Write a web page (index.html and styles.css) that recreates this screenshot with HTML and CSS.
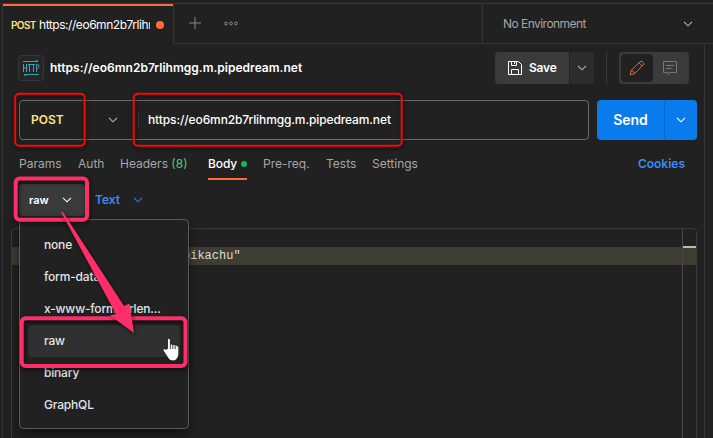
FILE: index.html
```html
<!DOCTYPE html>
<html lang="en">
<head>
<meta charset="utf-8">
<title>API client</title>
<link rel="stylesheet" href="styles.css">
</head>
<body>
<div class="app">
  <header class="topbar">
    <div class="tab"><span class="tab-method">POST</span><span class="tab-name">https://eo6mn2b7rlihm</span><i class="unsaved"></i></div>
    <div class="tab-tools">
      <svg class="plus" width="12" height="12" viewBox="0 0 12 12"><path d="M6 0v12M0 6h12"/></svg>
      <svg class="more" width="14" height="5" viewBox="0 0 14 5"><circle cx="2" cy="2.5" r="1.4"/><circle cx="7" cy="2.5" r="1.4"/><circle cx="12" cy="2.5" r="1.4"/></svg>
    </div>
    <div class="environment"><span>No Environment</span><svg class="chevron" width="10" height="6" viewBox="0 0 10 6"><path d="M1 .8l4 4 4-4"/></svg></div>
  </header>
  <main class="request">
    <div class="title-row">
      <span class="http"><svg width="18" height="16" viewBox="0 0 18 16"><path d="M1 1.5h15M13.5 0l2.5 1.5M2 14.5h15M2 14.5l2.5 1.5M1.5 4v8M4.5 4v8M1.5 8h3M6 4.5h4M7.5 4.5V12M9.5 4.5h3.5M11.5 4.5V12M14.5 12V4.5h1q1.5 0 1.5 1.7T15.5 8.5h-1"/></svg></span>
      <h1>https://eo6mn2b7rlihmgg.m.pipedream.net</h1>
      <div class="save-group">
        <button class="save"><svg width="14" height="14" viewBox="0 0 14 14"><path d="M.5.5h10l3 3v10H.5zM3.5.5v4h5v-4M6.5 1v2M3.5 13V8.5h7V13"/></svg>Save</button>
        <button class="save-more"><svg class="chevron" width="10" height="6" viewBox="0 0 10 6"><path d="M1 .8l4 4 4-4"/></svg></button>
      </div>
      <i class="separator"></i>
      <div class="modes">
        <span class="mode active"><svg width="16" height="16" viewBox="0 0 16 16"><path d="M1.2 14.8l1-4.3L11 1.7q1-1 2.2-.1l1.1 1.1q1 1.1 0 2.2L5.5 13.7zM10 2.8L13.2 6M2.2 10.5q2.5.3 3.3 3.2"/></svg></span>
        <span class="mode"><svg width="14" height="14" viewBox="0 0 14 14"><path d="M.5.5h13v11H7l-2 2v-2H.5zM3 4.5h8M3 7.5h5.5"/></svg></span>
      </div>
    </div>
    <div class="url-row">
      <div class="url-box">
        <span class="method">POST</span>
        <svg class="chevron" width="10" height="6" viewBox="0 0 10 6"><path d="M1 .8l4 4 4-4"/></svg>
        <span class="url">https://eo6mn2b7rlihmgg.m.pipedream.net</span>
      </div>
      <div class="send"><span>Send</span><b><svg class="chevron" width="10" height="6" viewBox="0 0 10 6"><path d="M1 .8l4 4 4-4"/></svg></b></div>
    </div>
    <nav>
      <a class="params">Params</a><a class="auth">Auth</a><a class="headers">Headers <em>(8)</em></a><a class="body-tab">Body<i></i></a><a class="pre">Pre-req.</a><a class="tests">Tests</a><a class="settings">Settings</a><a class="cookies">Cookies</a>
    </nav>
    <div class="body-options">
      <div class="type"><span>raw</span><svg class="chevron" width="10" height="6" viewBox="0 0 10 6"><path d="M1 .8l4 4 4-4"/></svg></div>
      <div class="language"><span>Text</span><svg class="chevron" width="10" height="6" viewBox="0 0 10 6"><path d="M1 .8l4 4 4-4"/></svg></div>
    </div>
    <section class="editor"><div class="code"><pre>pikachu"</pre></div><div class="ruler"><i></i></div></section>
  </main>
  <div class="menu">
    <div>none</div><div>form-data</div><div>x-www-form-urlen...</div><div class="selected">raw</div><div>binary</div><div>GraphQL</div>
  </div>
  <svg class="notes" width="713" height="438" viewBox="0 0 713 438">
    <g class="red"><rect x="15.2" y="93.7" width="69.5" height="52" rx="4"/><rect x="133.7" y="93.7" width="268" height="52" rx="4"/></g>
    <g class="pink"><rect x="15.7" y="178.5" width="71.3" height="41.2" rx="4"/><rect x="21.7" y="318.3" width="163.8" height="47.8" rx="4"/></g>
    <path class="arrow" d="M61 212Q62 211 63.5 213L124 306L129.5 303.5L134 333L110 315.5L116 314Z"/>
    <path class="hand" d="M167.5 348.5v-8.6q0-1.7 1.4-1.7t1.4 1.7v4.6q1-1 2.3.2 1.4-.8 2.4.5 1.5-.6 2.3.8 1.5-.2 1.5 1.6v5.9q0 3.2-1.8 5.4-1.5 2-4.2 2-3 0-4.4-2.3l-5-7.6q-.8-1.4.2-2.1 1.2-.7 2.3.5zM170.3 344.5v4.5M172.8 345v4M175.2 345.7v3.5"/>
  </svg>
</div>
</body>
</html>
```
FILE: styles.css
```css
* { box-sizing: border-box; }
body { margin: 0; background: #212121; color: #fff; font: 12px/16px Inter, sans-serif; }
svg { display: block; flex: none; fill: none; stroke: currentColor; }
h1, pre { margin: 0; }
button { border: 0; padding: 0; color: inherit; font: inherit; }
.app { position: relative; width: 713px; height: 438px; overflow: hidden; }
.topbar { display: flex; height: 44px; padding: 3px 0 0 2px; background: linear-gradient(#3a3a3a, #3a3a3a) 0 3px / 100% 1px no-repeat; }
.tab { display: flex; align-items: center; width: 172px; padding: 3px 9px 0 8px; border: solid #353535; border-width: 0 1px; background: linear-gradient(#ff6c37, #ff6c37) 0 1px / 100% 2px no-repeat; }
.tab-method { flex: none; width: 28px; color: #ffe47e; font-size: 10px; font-weight: 600; letter-spacing: -.6px; }
.tab-name { flex: none; width: 111px; overflow: hidden; white-space: nowrap; letter-spacing: -.45px; }
.unsaved { flex: none; width: 8px; height: 8px; margin-left: 6px; border-radius: 50%; background: #ff6c37; }
.tab-tools { display: flex; align-items: center; gap: 23px; width: 308px; padding-left: 15px; border-bottom: 1px solid #353535; color: #888; }
.more { stroke-width: 1; }
.environment { display: flex; align-items: center; justify-content: space-between; flex: 1; padding: 1px 20px 0 20px; border: solid #353535; border-width: 0 0 1px 1px; color: #a6a6a6; letter-spacing: -.54px; }
.chevron { color: #b5b5b5; stroke-width: 1.1; }
.request { width: 703px; height: 394px; margin-left: 2px; padding: 0 7px 0 8px; border: solid #353535; border-width: 0 1px; }
.title-row { display: flex; align-items: center; height: 48px; padding-left: 7px; }
.http { display: grid; place-items: center; width: 26px; height: 26px; border: 1px solid #383838; border-radius: 4px; color: #38a5b5; background: #262626; }
h1 { width: 445px; margin-left: 6px; font-size: 12px; line-height: 16px; font-weight: 600; letter-spacing: .02px; }
.save-group { display: flex; gap: 1px; height: 32px; }
.save { display: flex; align-items: center; gap: 7px; width: 74px; padding-left: 13px; border-radius: 4px 0 0 4px; background: #3b3b3b; font-weight: 600; letter-spacing: -.2px; }
.save-more { display: grid; place-items: center; width: 24px; border-radius: 0 4px 4px 0; background: #2c2c2c; }
.separator { width: 1px; height: 32px; margin: 0 12px; background: #3a3a3a; }
.modes { display: flex; width: 70px; height: 32px; padding: 2px; border-radius: 4px; background: #3b3b3b; }
.mode { display: grid; place-items: center; width: 34px; color: #777; }
.mode.active { width: 32px; border-radius: 4px; background: #212121; color: #e76535; }
.url-row { display: flex; gap: 8px; margin: 8px 0 0 8px; height: 40px; }
.url-box { display: flex; align-items: center; width: 570px; padding-left: 11px; border: 1px solid #6b6b6b; border-radius: 4px; }
.method { width: 77px; color: #ffe47e; font-weight: 600; }
.url { height: 18px; margin-left: 20px; padding-left: 9px; border-left: 1px solid #3a3a3a; font-weight: 500; line-height: 18px; letter-spacing: -.11px; white-space: nowrap; }
.send { display: flex; align-items: stretch; width: 100px; border-radius: 4px; background: #097bed; font: 600 14px/40px Inter, sans-serif; text-align: center; }
.send span { width: 67px; }
.send b { display: grid; flex: 1; place-items: center; border-left: 1px solid #0869cc; }
.send .chevron { color: #fff; }
nav { display: flex; height: 40px; padding: 12px 12px 0 8px; line-height: 24px; color: #a6a6a6; white-space: nowrap; }
nav a { height: 28px; }
nav em { color: #4cce78; font-style: normal; }
.params { width: 59px; }
.auth { width: 42px; }
.headers { width: 88px; }
.body-tab { display: flex; align-items: center; justify-content: space-between; width: 39px; margin-right: 16px; padding-bottom: 2px; border-bottom: 2px solid #ff6c37; color: #fff; font-weight: 500; letter-spacing: -.1px; }
.body-tab i { width: 6px; height: 6px; border-radius: 50%; background: #0cbb52; }
.pre { width: 63px; }
.tests { width: 46px; }
.cookies { margin-left: auto; color: #3b8af7; font-weight: 600; }
.body-options { display: flex; gap: 10px; height: 48px; padding: 4px 0 12px 8px; }
.type, .language { display: flex; align-items: center; justify-content: space-between; font-weight: 600; }
.type { width: 66px; padding: 0 13px 0 10px; border-radius: 4px; background: #3a3a3a; font-size: 11px; }
.type .chevron { color: #fff; }
.language { width: 48px; color: #3b8af7; }
.language .chevron { color: #2e80e8; }
.editor { display: flex; width: 686px; height: 214px; border: 1px solid #3a3a3a; border-radius: 4px 4px 0 0; }
.code { flex: 1; padding-top: 18px; }
.code pre { height: 18px; padding-left: 171px; background: #3d3d31; color: #ddd; font: 12px/18px "Liberation Mono", monospace; }
.ruler { width: 14px; border-left: 1px solid #484848; padding-top: 17px; }
.ruler i { display: block; height: 19px; border-top: 2px solid #b8b9b2; background: #3d3d31; }
.menu { position: absolute; left: 19px; top: 219px; width: 170px; height: 210px; padding: 9px 8px; border: 1px solid #5a5a5a; border-radius: 4px; background: #212121; box-shadow: 0 5px 12px #0008; font-weight: 500; line-height: 32px; letter-spacing: -.18px; }
.menu div { height: 32px; padding-left: 16px; border-radius: 4px; color: #e4e4e4; white-space: nowrap; }
.menu .selected { background: #303030; }
.notes { position: absolute; inset: 0; }
.red, .pink { filter: drop-shadow(1px 2px 2px #0009); }
.red { stroke: #f40909; stroke-width: 2; }
.pink { stroke: #ff2d69; stroke-width: 4; }
.arrow { fill: #ff2d69; stroke: none; filter: drop-shadow(1px 2px 2px #0008); }
.hand { fill: #fff; stroke: #151515; stroke-width: .8; }
```
